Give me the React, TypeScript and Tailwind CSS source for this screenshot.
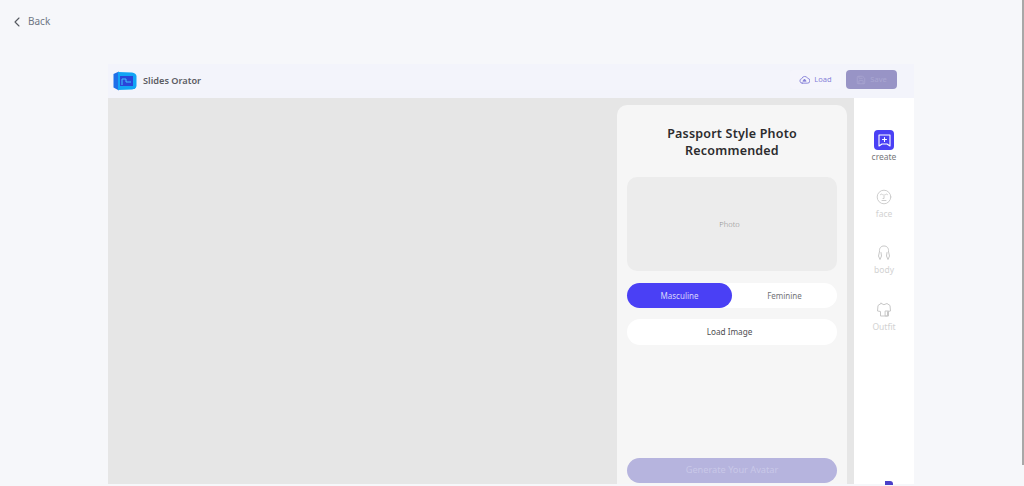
import React from 'react';
import { ChevronLeft, Save } from 'lucide-react';

const font = 'font-["Noto_Sans",sans-serif]';

const Logo = () => (
  <svg width="24" height="20" viewBox="0 0 24 20" fill="none">
    <path d="M0.500 3 L6 0.500 L6 19.500 L0.500 16.500 Z" fill="#1f6fe8" />
    <path d="M5 1 L19 1.500 Q23 2 23.500 5 L23.500 15 Q23 18 19 18.500 L5 19 Z" fill="#12a4f5" />
    <path d="M7 5 L20 5 L20 15 L7 15 Z" fill="#2a45d8" />
    <path d="M9 14 L9 8 L13 8 L13 11 L18 11" stroke="#3fc4ff" strokeWidth="1" fill="none" />
  </svg>
);

const CloudLoad = () => (
  <svg width="11" height="11" viewBox="0 0 24 24" fill="none" stroke="#8580d8" strokeWidth="2" strokeLinecap="round" strokeLinejoin="round">
    <path d="M7 20a5 5 0 0 1-1-9.900A7 7 0 0 1 19 9.500a5.200 5.200 0 0 1-1 10.500H7z" />
    <path d="M9 15l3-4 3 4z" fill="#8580d8" />
  </svg>
);

const CreateIcon = () => (
  <div className="flex h-[20px] w-[20px] items-center justify-center rounded-[4px] bg-[#4a40f5]">
    <svg width="15" height="15" viewBox="0 0 15 15" fill="none" stroke="#ffffff" strokeWidth="1.100" strokeLinecap="round" strokeLinejoin="round">
      <path d="M2 2h11v11l-3-2H5l-3 2z" />
      <path d="M7.500 4.500v4M5.500 6.500h4" />
    </svg>
  </div>
);

const FaceIcon = () => (
  <svg width="16" height="16" viewBox="0 0 16 16" fill="none" stroke="#c8c8c8" strokeWidth="0.900" strokeLinecap="round">
    <circle cx="8" cy="8" r="6.800" />
    <path d="M4.500 5.500q1-1 2 0M9.500 5.500q1-1 2 0M8 5.500v4h-1M6 11.500h4" />
  </svg>
);

const BodyIcon = () => (
  <svg width="16" height="16" viewBox="0 0 16 16" fill="none" stroke="#c8c8c8" strokeWidth="1" strokeLinecap="round" strokeLinejoin="round">
    <path d="M3.500 6.500C3 3 5 1 8 1s5 2 4.500 5.500" />
    <path d="M3.500 6.500 2.500 11l1.500 3.500L5.500 11 5 7.500" />
    <path d="M12.500 6.500l1 4.500-1.500 3.500L10.500 11l.5-3.500" />
  </svg>
);

const OutfitIcon = () => (
  <svg width="16" height="16" viewBox="0 0 16 16" fill="none" stroke="#c8c8c8" strokeWidth="1" strokeLinecap="round" strokeLinejoin="round">
    <path d="M5 1.500 2 3.500 1.500 9l3 .5V14h7V9.500l3-.5L14 3.500 11 1.500Q8 4 5 1.500z" />
    <path d="M9.500 9h3v5h-3z" />
  </svg>
);

const SideItem = ({ icon, label, active }: { icon: React.ReactNode; label: string; active?: boolean }) => (
  <div className="flex h-[56.500px] flex-col items-center">
    <div className="flex h-[20px] items-center justify-center">{icon}</div>
    <span className={`mt-[1px] text-[8.500px] leading-[12px] ${active ? 'text-[#77777c]' : 'text-[#d2d2d2]'}`}>{label}</span>
  </div>
);

export default function App() {
  return (
    <div className={`relative flex h-[486px] w-full flex-col overflow-hidden bg-[#f6f7fa] ${font}`}>
      {/* scrollbar sliver on the window edge */}
      <div className="absolute right-0 top-0 h-[465px] w-[2px] bg-[#a8a8a8]" />

      <div className="flex h-[64px] shrink-0 items-start pl-[9px] pt-[13px]">
        <ChevronLeft size={16} strokeWidth={1.600} className="mt-[1px] text-[#55585f]" />
        <span className="ml-[3px] text-[10px] leading-[17px] text-[#6f7684]">Back</span>
      </div>

      <div className="ml-[108px] flex w-[806px] flex-col">
        {/* top bar */}
        <div className="flex h-[34px] items-center justify-between bg-[#f3f4fb] pl-[5px] pr-[17px]">
          <div className="mb-[1px] flex items-center gap-[6px]">
            <Logo />
            <span className="text-[9.200px] font-semibold text-[#5b5c63]">Slides Orator</span>
          </div>
          <div className="mb-[3px] flex items-center gap-[5px]">
            <button className="flex h-[19px] w-[51px] items-center justify-center gap-[4px] rounded-[4px] bg-[#f5f5fc] text-[7.500px] text-[#8580d8]">
              <CloudLoad />
              Load
            </button>
            <button className="flex h-[19px] w-[51px] items-center justify-center gap-[4px] rounded-[4px] bg-[#9894c6] text-[7.500px] text-[#aaa7d2]">
              <Save size={10} strokeWidth={1.800} />
              Save
            </button>
          </div>
        </div>

        <div className="flex h-[386px]">
          {/* canvas */}
          <div className="flex flex-1 justify-end bg-[#e6e6e6] pr-[7px] pt-[7px]">
            <div className="flex h-[379px] w-[230px] flex-col rounded-t-[10px] bg-[#f6f6f6] px-[10px] pb-[1px]">
              <h2 className="mt-[20px] text-center text-[12.500px] font-semibold leading-[17px] tracking-[0.200px] text-[#2c2c2e]">
                Passport Style Photo
                <br />
                Recommended
              </h2>
              <div className="mt-[18px] flex h-[94px] items-center justify-center rounded-[10px] bg-[#ececec] pr-[5px] pt-[1px] text-[7.500px] font-light text-[#8f8f8f]">
                Photo
              </div>
              <div className="mt-[12px] flex h-[25px] rounded-full bg-white text-[8px]">
                <div className="flex w-[105px] items-center justify-center rounded-full bg-[#4a40f5] text-[#d9d7fb]">Masculine</div>
                <div className="flex flex-1 items-center justify-center text-[#737377]">Feminine</div>
              </div>
              <button className="mt-[11px] h-[26px] rounded-full bg-white pr-[5px] text-[8.200px] text-[#4e4e52]">Load Image</button>
              <button className="mt-auto h-[25px] rounded-full bg-[#b6b4de] pb-[1px] text-[9.200px] text-[#c9c8e8]">Generate Your Avatar</button>
            </div>
          </div>

          {/* side nav */}
          <div className="relative flex w-[60px] flex-col bg-white pt-[32px]">
            <SideItem icon={<CreateIcon />} label="create" active />
            <SideItem icon={<FaceIcon />} label="face" />
            <SideItem icon={<BodyIcon />} label="body" />
            <SideItem icon={<OutfitIcon />} label="Outfit" />
            <div className="absolute bottom-[-1px] left-[31px] h-[4px] w-[8px] rounded-tr-[3px] bg-[#4a40c8]" />
          </div>
        </div>
      </div>
    </div>
  );
}
